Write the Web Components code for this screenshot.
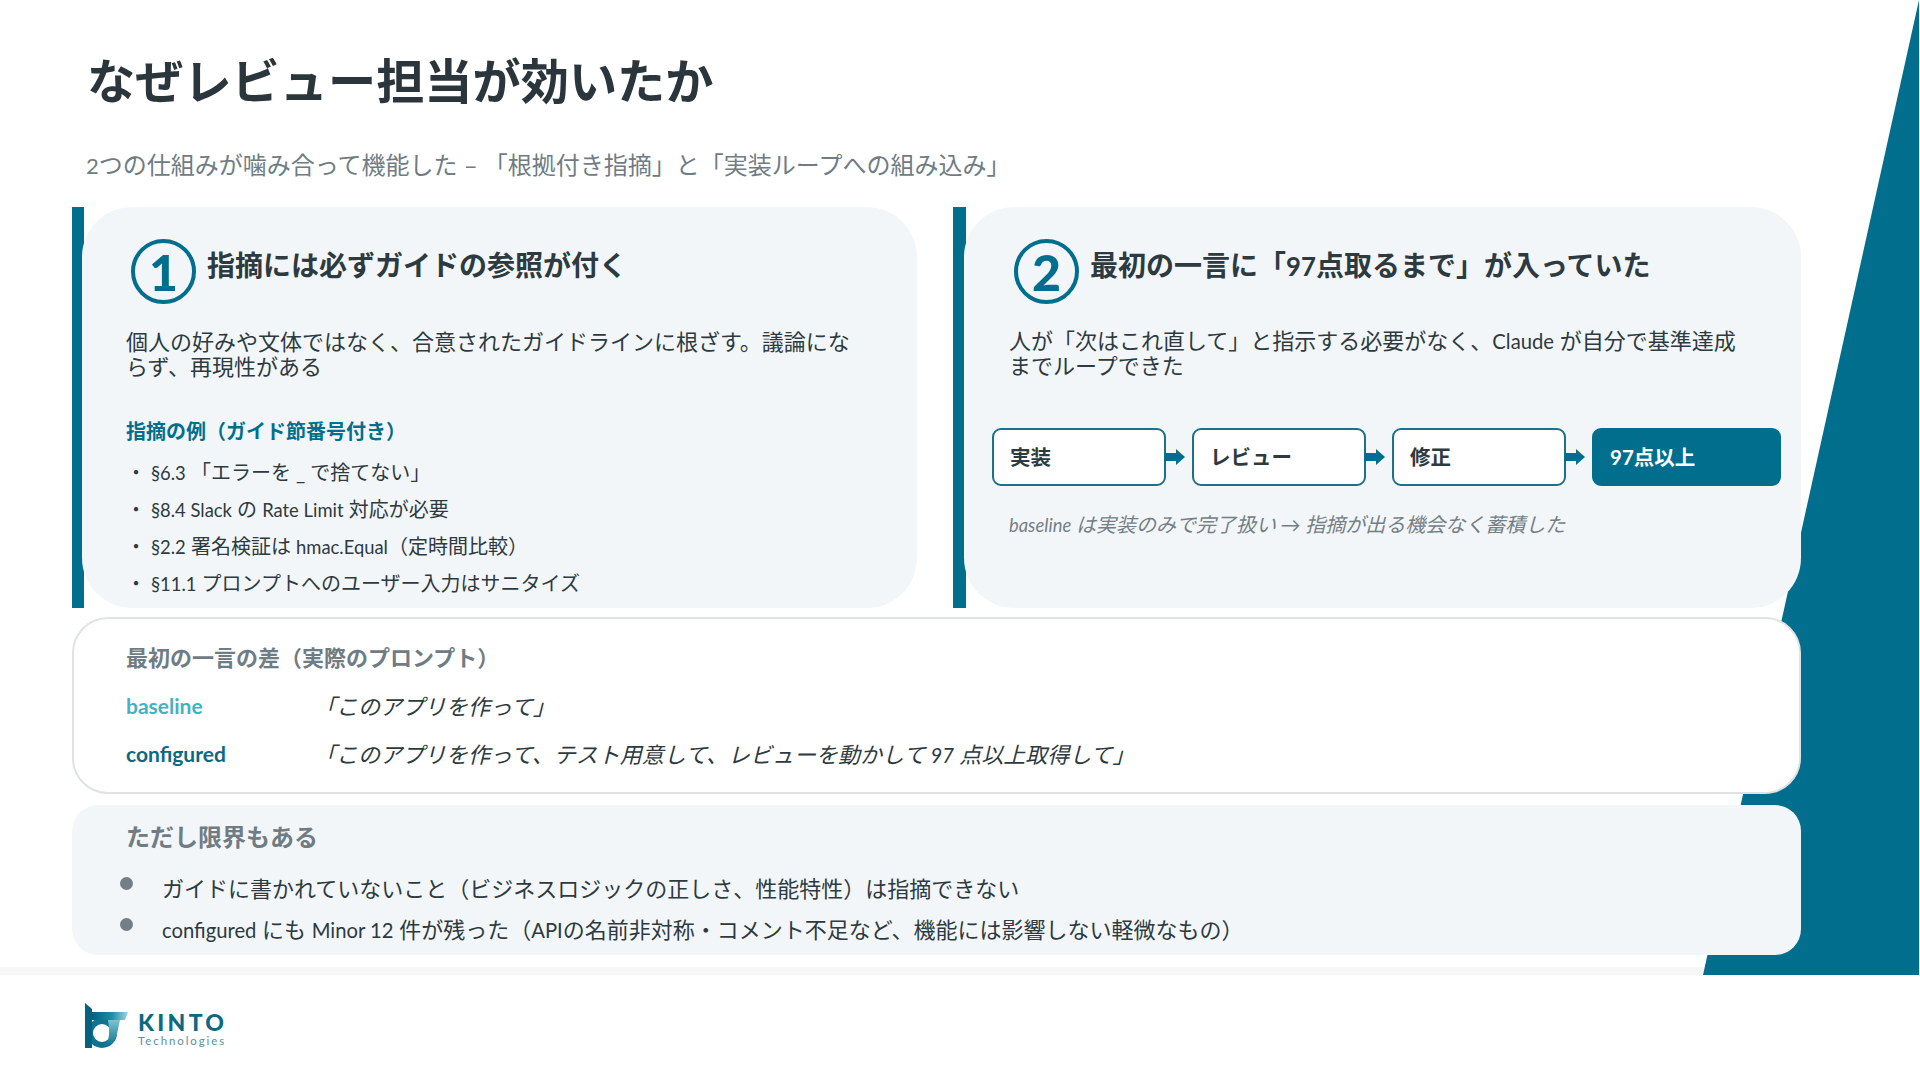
<!DOCTYPE html>
<html lang="ja">
<head>
<meta charset="utf-8">
<title>なぜレビュー担当が効いたか</title>
<style>
  html, body { margin: 0; padding: 0; background: #fff; }
  body { font-family: Lato, "Noto Sans CJK JP", sans-serif; color: #2d3a40; }
</style>
</head>
<body>
<review-slide>
  <slide-head slot="head" title="なぜレビュー担当が効いたか" sub="<la-t>2</la-t>つの仕組みが噛み合って機能した – 「根拠付き指摘」と「実装ループへの組み込み」"></slide-head>

  <point-card slot="left" num="1" heading="指摘には必ずガイドの参照が付く" lead="個人の好みや文体ではなく、合意されたガイドラインに根ざす。議論にならず、再現性がある">
    <example-list heading="指摘の例（ガイド節番号付き）">
      <li><la-t>§6.3</la-t> 「エラーを _ で捨てない」</li>
      <li><la-t>§8.4 Slack</la-t> の <la-t>Rate Limit</la-t> 対応が必要</li>
      <li><la-t>§2.2</la-t> 署名検証は <la-t>hmac.Equal</la-t>（定時間比較）</li>
      <li><la-t>§11.1</la-t> プロンプトへのユーザー入力はサニタイズ</li>
    </example-list>
  </point-card>

  <point-card slot="right" num="2" heading="最初の一言に「<la-t>97</la-t>点取るまで」が入っていた" lead="人が「次はこれ直して」と指示する必要がなく、<la-t>Claude</la-t> が自分で基準達成までループできた">
    <flow-row>
      <flow-step>実装</flow-step>
      <flow-step>レビュー</flow-step>
      <flow-step>修正</flow-step>
      <flow-step done>97点以上</flow-step>
    </flow-row>
    <flow-note><la-t>baseline</la-t> は実装のみで完了扱い → 指摘が出る機会なく蓄積した</flow-note>
  </point-card>

  <prompt-box slot="prompt" heading="最初の一言の差（実際のプロンプト）">
    <prompt-row label="baseline" tone="#3fb4c0">「このアプリを作って」</prompt-row>
    <prompt-row label="configured" tone="#0a6a80">「このアプリを作って、テスト用意して、レビューを動かして <la-t>97</la-t> 点以上取得して」</prompt-row>
  </prompt-box>

  <limit-box slot="limit" heading="ただし限界もある">
    <li>ガイドに書かれていないこと（ビジネスロジックの正しさ、性能特性）は指摘できない</li>
    <li><la-t>configured</la-t> にも <la-t>Minor 12</la-t> 件が残った（<la-t>API</la-t>の名前非対称・コメント不足など、機能には影響しない軽微なもの）</li>
  </limit-box>

  <kinto-logo slot="foot"></kinto-logo>
</review-slide>

<script>
// latin runs sit a bit smaller than the kana around them
class LaT extends HTMLElement {
  constructor() {
    super();
    this.attachShadow({ mode: 'open' });
    this.shadowRoot.innerHTML = `<style>:host { display: inline; font-size: .92em; }</style><slot></slot>`;
  }
}

class ReviewSlide extends HTMLElement {
  constructor() {
    super();
    this.attachShadow({ mode: 'open' });
    this.shadowRoot.innerHTML = `
      <style>
        :host { display: block; width: 1920px; height: 1080px; position: relative; overflow: hidden; background: #fff; }
        .wedge { position: absolute; left: 0; top: 0; width: 1919px; height: 975px; background: #016e8e;
                 clip-path: polygon(1919px 0, 1919px 975px, 1703px 975px); }
        .band { position: absolute; left: 0; top: 967px; width: 1703px; height: 8px; background: #f7f7f7; }
        .main { position: relative; padding-left: 72px; width: 1729px; }
        .cards { display: grid; grid-template-columns: 845px 848px; column-gap: 36px; height: 401px; }
        .stack { display: flex; flex-direction: column; gap: 11px; margin-top: 9px; }
        .foot { position: absolute; left: 84px; top: 1003px; }
      </style>
      <div class="wedge"></div>
      <div class="band"></div>
      <div class="main">
        <slot name="head"></slot>
        <div class="cards">
          <slot name="left"></slot>
          <slot name="right"></slot>
        </div>
        <div class="stack">
          <slot name="prompt"></slot>
          <slot name="limit"></slot>
        </div>
      </div>
      <div class="foot"><slot name="foot"></slot></div>`;
  }
}

class SlideHead extends HTMLElement {
  constructor() {
    super();
    this.attachShadow({ mode: 'open' });
  }
  connectedCallback() {
    this.shadowRoot.innerHTML = `
      <style>
        :host { display: block; height: 207px; padding-left: 15px; box-sizing: border-box; }
        h1 { margin: 0; padding-top: 45px; font-size: 48.2px; line-height: 70px; font-weight: 700; color: #2b363c; }
        p { margin: 0; padding-top: 33px; font-size: 24px; line-height: 34px; color: #6f7c83; margin-left: -1px; }
      </style>
      <h1>${this.getAttribute('title')}</h1>
      <p>${this.getAttribute('sub')}</p>`;
  }
}

class PointCard extends HTMLElement {
  constructor() {
    super();
    this.attachShadow({ mode: 'open' });
  }
  connectedCallback() {
    this.shadowRoot.innerHTML = `
      <style>
        :host { display: flex; height: 401px; }
        .bar { width: 12px; background: #016e8e; flex: none; }
        :host([num="2"]) .bar { width: 13px; }
        .panel { flex: 1; background: #f3f6f8; border-radius: 50px; margin-left: -2px; padding: 32px 58px 0 49px; box-sizing: border-box; min-width: 0; }
        :host([num="2"]) .panel { padding-left: 50px; }
        .top { display: flex; align-items: flex-start; gap: 11px; white-space: nowrap; }
        .num { width: 65px; height: 65px; flex: none; box-sizing: border-box; border: 4.5px solid #016e8e; border-radius: 50%;
               display: flex; align-items: center; justify-content: center; color: #016e8e; font-size: 50px; font-weight: 900; line-height: 1; }
        h2 { margin: 0; font-size: 28px; line-height: 40px; font-weight: 700; color: #2d3a40; padding-top: 6px; }
        p { margin: 0; padding-top: 26px; font-size: 22px; line-height: 24.5px; color: #2d3a40; margin-left: -5px; }
        :host([num="2"]) p { padding-top: 25px; }
      </style>
      <div class="bar"></div>
      <div class="panel">
        <div class="top"><div class="num">${this.getAttribute('num')}</div><h2>${this.getAttribute('heading')}</h2></div>
        <p>${this.getAttribute('lead')}</p>
        <slot></slot>
      </div>`;
  }
}

class ExampleList extends HTMLElement {
  constructor() {
    super();
    this.attachShadow({ mode: 'open' });
  }
  connectedCallback() {
    this.shadowRoot.innerHTML = `
      <style>
        :host { display: block; margin-top: 39px; margin-left: -5px; }
        h3 { margin: 0 0 10px; font-size: 20px; line-height: 26px; font-weight: 700; color: #016e8e; }
        ::slotted(li) { list-style: none; font-size: 20px; line-height: 36px; color: #2d3a40; padding-left: 25px; position: relative; white-space: nowrap; }
        ::slotted(li)::before { content: "・"; position: absolute; left: 0; }
      </style>
      <h3>${this.getAttribute('heading')}</h3>
      <slot></slot>`;
  }
}

class FlowRow extends HTMLElement {
  constructor() {
    super();
    this.attachShadow({ mode: 'open' });
    this.shadowRoot.innerHTML = `
      <style>
        :host { display: flex; gap: 26px; margin: 50px -30px 0 -22px; }
      </style>
      <slot></slot>`;
  }
}

class FlowStep extends HTMLElement {
  constructor() {
    super();
    this.attachShadow({ mode: 'open' });
    this.shadowRoot.innerHTML = `
      <style>
        :host { display: block; position: relative; width: 174px; height: 58px; box-sizing: border-box; flex: none;
                border: 2px solid #1a7189; border-radius: 9px; background: #fff; color: #2d3a40;
                font-size: 20.5px; font-weight: 700; line-height: 54px; padding-left: 16px; }
        :host([done]) { width: 189px; background: #016e8e; color: #fff; border-color: #016e8e; }
        svg { position: absolute; left: 100%; top: 19px; }
        :host([done]) svg { display: none; }
      </style>
      <slot></slot>
      <svg width="22" height="16" viewBox="0 0 22 16"><path d="M0 4h12V0l9 8-9 8v-4H0z" fill="#016e8e"/></svg>`;
  }
}

class FlowNote extends HTMLElement {
  constructor() {
    super();
    this.attachShadow({ mode: 'open' });
    this.shadowRoot.innerHTML = `
      <style>
        :host { display: block; margin: 24px 0 0 -5px; font-size: 20px; line-height: 28px; font-style: italic; color: #737f86; white-space: nowrap; }
      </style>
      <slot></slot>`;
  }
}

class PromptBox extends HTMLElement {
  constructor() {
    super();
    this.attachShadow({ mode: 'open' });
  }
  connectedCallback() {
    this.shadowRoot.innerHTML = `
      <style>
        :host { display: block; height: 177px; box-sizing: border-box; background: #fff; border: 2px solid #dfe3e5; border-radius: 36px; padding: 24px 0 0 52px; }
        h3 { margin: 0 0 8px; font-size: 22px; line-height: 30px; font-weight: 700; color: #6f7c83; }
      </style>
      <h3>${this.getAttribute('heading')}</h3>
      <slot></slot>`;
  }
}

class PromptRow extends HTMLElement {
  constructor() {
    super();
    this.attachShadow({ mode: 'open' });
  }
  connectedCallback() {
    this.shadowRoot.innerHTML = `
      <style>
        :host { display: flex; height: 48px; align-items: center; }
        b { width: 188px; flex: none; font-size: 21px; font-weight: 700; color: ${this.getAttribute('tone')}; }
        i { font-size: 22px; font-style: italic; color: #2d3a40; }
      </style>
      <b>${this.getAttribute('label')}</b><i><slot></slot></i>`;
  }
}

class LimitBox extends HTMLElement {
  constructor() {
    super();
    this.attachShadow({ mode: 'open' });
  }
  connectedCallback() {
    this.shadowRoot.innerHTML = `
      <style>
        :host { display: block; height: 150px; box-sizing: border-box; background: #f3f6f8; border-radius: 26px; padding: 14px 0 0 54px; }
        h3 { margin: 0 0 12.500px; font-size: 24px; line-height: 36px; font-weight: 700; color: #6f7c83; }
        ::slotted(li) { list-style: none; position: relative; margin-left: -54px; padding-left: 90px; font-size: 22px; line-height: 41px; color: #2d3a40; white-space: nowrap; }
        ::slotted(li)::before { content: ""; position: absolute; left: 48px; top: 9px; width: 13px; height: 13px; border-radius: 50%; background: #737f86; }
      </style>
      <h3>${this.getAttribute('heading')}</h3>
      <slot></slot>`;
  }
}

class KintoLogo extends HTMLElement {
  constructor() {
    super();
    this.attachShadow({ mode: 'open' });
    this.shadowRoot.innerHTML = `
      <style>
        :host { display: flex; align-items: flex-start; gap: 8px; }
        svg { display: block; }
        .name { display: flex; flex-direction: column; padding-top: 9px; }
        .k { font-size: 23px; line-height: 20px; font-weight: 900; letter-spacing: 3.3px; color: #0b6a80; }
        .t { font-size: 11.500px; line-height: 14px; letter-spacing: 1.9px; color: #5d8f9e; margin-top: 2px; }
      </style>
      <svg width="46" height="46" viewBox="0 0 46 46">
        <defs>
          <linearGradient id="g" x1="0" x2="1" y1="0" y2="0">
            <stop offset="0" stop-color="#04607f"/><stop offset=".55" stop-color="#1b8ea6"/><stop offset="1" stop-color="#9fd6dc"/>
          </linearGradient>
          <linearGradient id="s" x1="0" x2="0" y1="0" y2="1">
            <stop offset="0" stop-color="#7cc4cf"/><stop offset="1" stop-color="#0b6f8c"/>
          </linearGradient>
        </defs>
        <circle cx="18" cy="30" r="12" fill="none" stroke="#0f7390" stroke-width="6"/>
        <path d="M24 17H36L33 31C31 39 26 43 18 44 26 39 25 32 25 25z" fill="url(#s)"/>
        <path d="M8 9H44L41 17H8z" fill="url(#g)"/>
        <path d="M1 0L8 6V45H1z" fill="#04607f"/>
      </svg>
      <div class="name"><span class="k">KINTO</span><span class="t">Technologies</span></div>`;
  }
}

customElements.define('la-t', LaT);
customElements.define('review-slide', ReviewSlide);
customElements.define('slide-head', SlideHead);
customElements.define('point-card', PointCard);
customElements.define('example-list', ExampleList);
customElements.define('flow-row', FlowRow);
customElements.define('flow-step', FlowStep);
customElements.define('flow-note', FlowNote);
customElements.define('prompt-box', PromptBox);
customElements.define('prompt-row', PromptRow);
customElements.define('limit-box', LimitBox);
customElements.define('kinto-logo', KintoLogo);
</script>
</body>
</html>
